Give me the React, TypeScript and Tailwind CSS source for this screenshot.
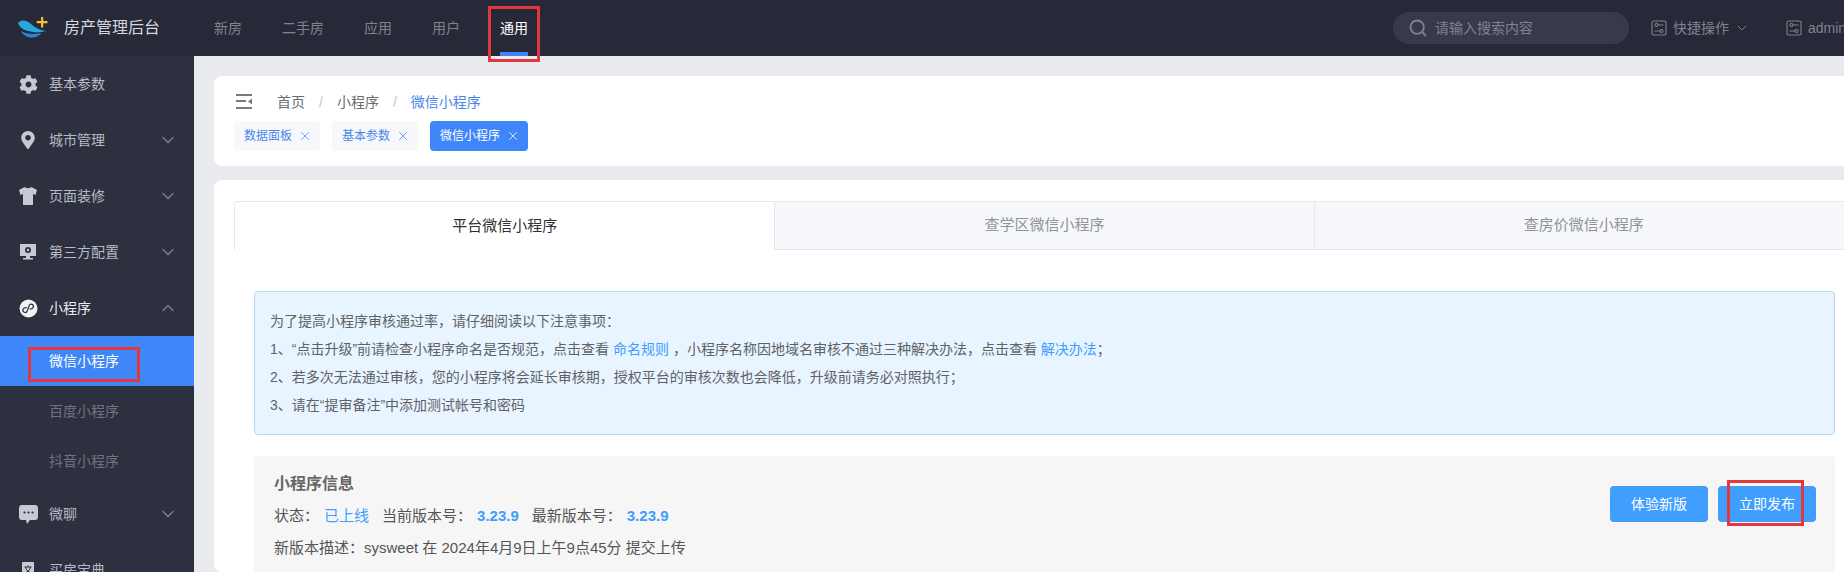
import type { ReactNode } from 'react'
import { FaCog, FaMapMarkerAlt } from 'react-icons/fa'
import { ChevronDown, ChevronUp, Search, X } from 'lucide-react'

const FONT = 'font-["Liberation_Sans","Noto_Sans_CJK_SC",sans-serif]'

function Logo() {
  return (
    <svg width="31" height="22" viewBox="0 0 31 22" className="shrink-0">
      <path d="M1 6C4 2 10 3 14 7c3 3 8 6 15 7-5 1-9 2-13 1C9 14 3 12 1 6z" fill="#2ba6dc" />
      <path d="M4 14c5 3 13 4 21 2-3 3-9 6-14 4-3-1-6-3-7-6z" fill="#2488d4" />
      <path d="M24 0h2.200v4h4.300v2.200h-4.300v4.300H24V6.200h-4.300V4H24z" fill="#f5c033" />
    </svg>
  )
}

function SlidersBox() {
  return (
    <svg width="16" height="16" viewBox="0 0 16 16" fill="none" stroke="#80828e" strokeWidth="1.1" className="shrink-0">
      <rect x="1" y="1" width="14" height="14" rx="1.5" />
      <circle cx="5.5" cy="5" r="1.5" />
      <path d="M7 5h5.5M3.5 11H9" />
      <circle cx="10.5" cy="11" r="1.5" />
    </svg>
  )
}

function ShirtIcon() {
  return (
    <svg width="18" height="18" viewBox="0 0 18 18">
      <path d="M5.5 0C7 1.5 11 1.5 12.500 0L18 3l-1.500 5L14 7v11H4V7L1.500 8 0 3z" fill="#c6cad3" />
    </svg>
  )
}

function MonitorIcon() {
  return (
    <svg width="18" height="18" viewBox="0 0 18 18">
      <path d="M1 1h16v12H1zM7 13h4v2h3v1.500H4V15h3z" fill="#c6cad3" />
      <circle cx="9" cy="7" r="3" fill="#2d303f" />
      <circle cx="9" cy="7" r="1.200" fill="#c6cad3" />
    </svg>
  )
}

function MiniProgramIcon() {
  return (
    <svg width="19" height="19" viewBox="0 0 19 19" fill="none">
      <circle cx="9.500" cy="9.500" r="9" fill="#f1f2f4" />
      <path
        d="M11 9.500c1.500-.5 2.500-1.500 2.500-2.800a2.200 2.200 0 0 0-4.400 0v5.600a2.200 2.200 0 0 1-4.400 0c0-1.300 1-2.300 2.500-2.800"
        stroke="#2d303f"
        strokeWidth="1.200"
        strokeLinecap="round"
        transform="rotate(20 9.500 9.500)"
      />
    </svg>
  )
}

function ChatIcon() {
  return (
    <svg width="19" height="19" viewBox="0 0 19 19">
      <path d="M3 0h13a3 3 0 0 1 3 3v9a3 3 0 0 1-3 3h-5l-3 4-1-4H3a3 3 0 0 1-3-3V3a3 3 0 0 1 3-3z" fill="#c6cad3" />
      <circle cx="5.500" cy="7.500" r="1.100" fill="#2d303f" />
      <circle cx="9.500" cy="7.500" r="1.100" fill="#2d303f" />
      <circle cx="13.500" cy="7.500" r="1.100" fill="#2d303f" />
    </svg>
  )
}

function BookIcon() {
  return (
    <svg width="14" height="18" viewBox="0 0 14 18">
      <path d="M1 1h12v16H1z" fill="#c6cad3" />
      <path d="M3.500 6h7M7 4.500V6M4.500 6c.5 3 3 5 6 6M9.500 6c-.5 3-3 5-6 6" stroke="#2d303f" strokeWidth="1" fill="none" />
    </svg>
  )
}

function CollapseIcon() {
  return (
    <svg width="16" height="15" viewBox="0 0 16 15" className="shrink-0">
      <path d="M0 0h16v2H0zM0 6h10v2H0zM0 13h16v2H0z" fill="#77797f" />
      <path d="M16 4.500v6L12 7.500z" fill="#77797f" />
    </svg>
  )
}

function SideItem({ icon, label, open, arrow = true, active }: { icon: ReactNode; label: string; open?: boolean; arrow?: boolean; active?: boolean }) {
  return (
    <div className="flex h-14 items-center">
      <span className="flex w-[49px] shrink-0 justify-center pl-[7px]">{icon}</span>
      <span className={`text-sm ${active ? 'text-[#e9ebef]' : 'text-[#b6bac4]'}`}>{label}</span>
      {arrow && (
        <span className="ml-auto mr-[16px] text-[#7f8390]">
          {open ? <ChevronUp size={20} strokeWidth={1.5} /> : <ChevronDown size={20} strokeWidth={1.5} />}
        </span>
      )}
    </div>
  )
}

function Tag({ label, active }: { label: string; active?: boolean }) {
  return (
    <div
      className={`flex h-[30px] items-center rounded-[4px] pl-[10px] pr-[8px] text-xs ${
        active ? 'bg-[#3f87f8] text-white' : 'bg-[#f6f8fc] text-[#4a86e8]'
      }`}
    >
      {label}
      <X size={14} strokeWidth={1.3} className="ml-[6px]" />
    </div>
  )
}

function Annotation({ className }: { className: string }) {
  return <div className={`absolute border-[3px] border-[#e0383e] ${className}`} />
}

export default function App() {
  return (
    <div className={`relative h-[572px] w-[1844px] overflow-hidden bg-[#eaebee] ${FONT}`}>
      {/* Top bar */}
      <header className="flex h-14 items-center bg-[#282938]">
        <div className="flex w-[214px] shrink-0 items-center pl-[17px]">
          <Logo />
          <span className="ml-[16px] text-base text-[#d5d7dd]">房产管理后台</span>
        </div>
        <nav className="flex h-14 items-center gap-10 text-sm text-[#80828e]">
          <span>新房</span>
          <span>二手房</span>
          <span>应用</span>
          <span>用户</span>
          <span className="relative flex h-14 items-center text-white">
            通用
            <span className="absolute bottom-0 left-0 h-1 w-full bg-[#3f87f8]" />
          </span>
        </nav>
        <div className="ml-auto flex items-center">
          <div className="flex h-8 w-[236px] items-center rounded-full bg-[#383a4b] pl-[15px] text-sm text-[#80828e]">
            <Search size={20} strokeWidth={2.2} className="mr-[7px]" />
            请输入搜索内容
          </div>
          <div className="ml-[22px] flex items-center text-sm text-[#80828e]">
            <SlidersBox />
            <span className="ml-[6px]">快捷操作</span>
            <ChevronDown size={16} strokeWidth={1.4} className="ml-[5px]" />
          </div>
          <div className="ml-[36px] flex w-[58px] items-center text-sm text-[#80828e]">
            <SlidersBox />
            <span className="ml-[6px]">admin</span>
          </div>
        </div>
      </header>

      <div className="flex">
        {/* Sidebar */}
        <aside className="h-[516px] w-[194px] shrink-0 overflow-hidden bg-[#2d303f]">
          <SideItem icon={<FaCog size={19} color="#c6cad3" />} label="基本参数" arrow={false} />
          <SideItem icon={<FaMapMarkerAlt size={18} color="#c6cad3" />} label="城市管理" />
          <SideItem icon={<ShirtIcon />} label="页面装修" />
          <SideItem icon={<MonitorIcon />} label="第三方配置" />
          <SideItem icon={<MiniProgramIcon />} label="小程序" open active />
          <div className="flex h-[50px] items-center bg-[#3f87f8] pl-[49px] text-sm text-white">微信小程序</div>
          <div className="flex h-[50px] items-center pl-[49px] text-sm text-[#6f7380]">百度小程序</div>
          <div className="flex h-[50px] items-center pl-[49px] text-sm text-[#6f7380]">抖音小程序</div>
          <SideItem icon={<ChatIcon />} label="微聊" />
          <SideItem icon={<BookIcon />} label="买房宝典" arrow={false} />
        </aside>

        {/* Content */}
        <main className="w-[1660px] shrink-0 pl-[20px] pt-[20px]">
          <section className="h-[90px] rounded-l-[8px] bg-white pl-[22px] pt-[18px]">
            <div className="flex h-[15px] items-center text-sm text-[#6b6d72]">
              <CollapseIcon />
              <span className="ml-[25px]">首页</span>
              <span className="mx-[14px] text-[#c0c4cc]">/</span>
              <span>小程序</span>
              <span className="mx-[14px] text-[#c0c4cc]">/</span>
              <span className="text-[#4a86e8]">微信小程序</span>
            </div>
            <div className="-ml-[2px] mt-[12px] flex gap-[12px]">
              <Tag label="数据面板" />
              <Tag label="基本参数" />
              <Tag label="微信小程序" active />
            </div>
          </section>

          <section className="mt-[14px] h-[392px] rounded-l-[8px] bg-white pt-[21px]">
            <div className="ml-[20px] flex h-[49px] text-[15px]">
              <div className="flex w-[541px] items-center justify-center rounded-tl-[4px] border-l border-t border-[#e4e7ed] bg-white text-[#303133]">
                平台微信小程序
              </div>
              <div className="flex w-[541px] items-center justify-center border-x border-y border-[#e4e7ed] bg-[#f5f7fa] text-[#909399]">
                查学区微信小程序
              </div>
              <div className="flex w-[540px] items-center justify-center border-y border-r border-[#e4e7ed] bg-[#f5f7fa] text-[#909399]">
                查房价微信小程序
              </div>
            </div>

            <div className="ml-[40px] mt-[41px] w-[1581px] rounded-[4px] border border-[#b9d6f0] bg-[#e8f4ff] px-[15px] py-[15px] text-sm leading-[28px] text-[#606266]">
              <p>为了提高小程序审核通过率，请仔细阅读以下注意事项：</p>
              <p>
                1、“点击升级”前请检查小程序命名是否规范，点击查看 <span className="text-[#409eff]">命名规则</span> ，小程序名称因地域名审核不通过三种解决办法，点击查看 <span className="text-[#409eff]">解决办法</span>；
              </p>
              <p>2、若多次无法通过审核，您的小程序将会延长审核期，授权平台的审核次数也会降低，升级前请务必对照执行；</p>
              <p>3、请在“提审备注”中添加测试帐号和密码</p>
            </div>

            <div className="ml-[40px] mt-[21px] flex h-[117px] w-[1581px] rounded-[4px] bg-[#f6f6f7] pl-[20px] pr-[19px] pt-[16px]">
              <div className="text-[15px] text-[#555555]">
                <h3 className="text-base font-bold leading-6 text-[#666666]">小程序信息</h3>
                <div className="mt-[8px] flex h-6 items-center">
                  <span>状态：</span>
                  <span className="ml-[5px] text-[#409eff]">已上线</span>
                  <span className="ml-[13px]">当前版本号：</span>
                  <span className="ml-[5px] font-bold text-[#409eff]">3.23.9</span>
                  <span className="ml-[13px]">最新版本号：</span>
                  <span className="ml-[5px] font-bold text-[#409eff]">3.23.9</span>
                </div>
                <p className="mt-[8px] leading-6">新版本描述：sysweet 在 2024年4月9日上午9点45分 提交上传</p>
              </div>
              <div className="ml-auto mt-[14px] flex gap-[10px]">
                <button className="h-9 w-[98px] rounded-[4px] bg-[#409eff] text-sm text-white">体验新版</button>
                <button className="h-9 w-[98px] rounded-[4px] bg-[#409eff] text-sm text-white">立即发布</button>
              </div>
            </div>
          </section>
        </main>
      </div>

      {/* Red review markers */}
      <Annotation className="left-[488px] top-[6px] h-[56px] w-[52px]" />
      <Annotation className="left-[28px] top-[347px] h-[35px] w-[112px]" />
      <Annotation className="left-[1727px] top-[480px] h-[46px] w-[77px]" />
    </div>
  )
}
